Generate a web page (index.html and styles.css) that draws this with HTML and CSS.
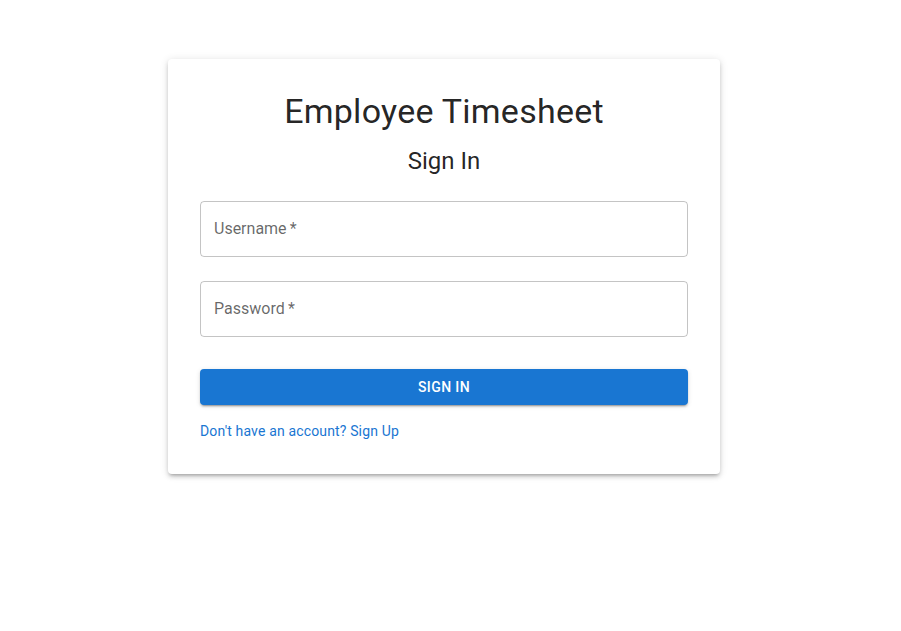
FILE: index.html
```html
<!DOCTYPE html>
<html lang="en">
<head>
<meta charset="utf-8">
<title>Employee Timesheet</title>
<link rel="stylesheet" href="styles.css">
</head>
<body>
<div class="page">
  <main class="container">
    <div class="paper">
      <h1 class="title">Employee Timesheet</h1>
      <h2 class="subtitle">Sign In</h2>
      <form class="form">
        <div class="field">
          <label class="field-label" for="username">Username&thinsp;*</label>
          <input class="field-input" id="username" type="text">
        </div>
        <div class="field">
          <label class="field-label" for="password">Password&thinsp;*</label>
          <input class="field-input" id="password" type="password">
        </div>
        <button class="btn" type="button">Sign In</button>
        <a class="link" href="#">Don't have an account? Sign Up</a>
      </form>
    </div>
  </main>
</div>
</body>
</html>
```
FILE: styles.css
```css
* { box-sizing: border-box; }
html, body { margin: 0; padding: 0; background: #fff; }
body {
  font-family: Roboto, "Helvetica", "Arial", sans-serif;
  color: rgba(0,0,0,0.87);
}
.page { width: 888px; padding-bottom: 40px; }
.container {
  max-width: 600px;
  margin: 0 auto;
  padding: 59px 24px 24px;
}
.paper {
  background: #fff;
  border-radius: 4px;
  padding: 32px 32px 33px;
  box-shadow: 0px 3px 3px -2px rgba(0,0,0,0.2), 0px 3px 4px 0px rgba(0,0,0,0.14), 0px 1px 8px 0px rgba(0,0,0,0.12);
}
.title {
  margin: 0 0 0.35em;
  font-size: 34px;
  font-weight: 400;
  line-height: 1.235;
  letter-spacing: 0.00735em;
  text-align: center;
}
.subtitle {
  margin: 0 0 0.35em;
  font-size: 24px;
  font-weight: 400;
  line-height: 1.334;
  text-align: center;
}
.form { display: flex; flex-direction: column; }
.field {
  position: relative;
  height: 56px;
  margin: 16px 0 8px;
  border: 1px solid rgba(0,0,0,0.23);
  border-radius: 4px;
  display: flex;
  align-items: center;
}
.field-label {
  position: absolute;
  left: 13px;
  top: 50%;
  transform: translateY(-52%);
  font-size: 16px;
  line-height: 1.4375;
  color: rgba(0,0,0,0.6);
  pointer-events: none;
}
.field-input {
  width: 100%;
  height: 100%;
  border: 0;
  outline: 0;
  background: transparent;
  padding: 16.5px 14px;
  font: inherit;
  font-size: 16px;
}
.btn {
  margin: 24px 0 16px;
  height: 36px;
  border: 0;
  border-radius: 4px;
  background: #1976d2;
  color: #fff;
  font-family: Roboto, "Helvetica", "Arial", sans-serif;
  font-size: 14px;
  font-weight: 500;
  line-height: 1.75;
  letter-spacing: 0.02857em;
  text-transform: uppercase;
  box-shadow: 0px 3px 1px -2px rgba(0,0,0,0.2), 0px 2px 2px 0px rgba(0,0,0,0.14), 0px 1px 5px 0px rgba(0,0,0,0.12);
  cursor: pointer;
}
.link {
  align-self: flex-start;
  font-size: 14px;
  line-height: 1.43;
  letter-spacing: 0.01071em;
  color: #1976d2;
  text-decoration: none;
}
```
